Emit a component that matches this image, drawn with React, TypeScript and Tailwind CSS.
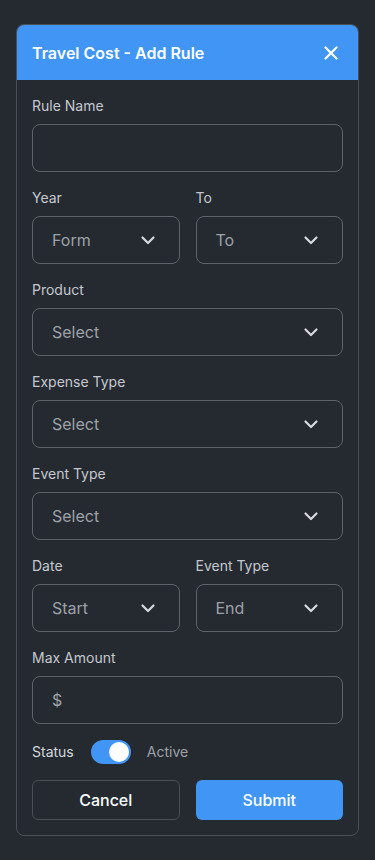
import React from "react";

function Chevron() {
  return (
    <svg width="24" height="24" viewBox="0 0 24 24" fill="none" stroke="#d6d9de" strokeWidth="2.2" strokeLinecap="round" strokeLinejoin="round">
      <path d="M6.5 9.5l5.5 5.5 5.5-5.5" />
    </svg>
  );
}

function SelectBox({ text }: { text: string }) {
  return (
    <div className="h-12 rounded-lg border border-[#5d636b] flex items-center justify-between pl-[19px] pr-[19px]">
      <span className="text-base text-[#9ca1a8]">{text}</span>
      <Chevron />
    </div>
  );
}

function Label({ children }: { children: React.ReactNode }) {
  return <div className="text-sm leading-5 text-[#c4c8ce] mb-2">{children}</div>;
}

export default function App() {
  return (
    <div className="min-h-[860px] bg-[#252a31] pt-6 px-4" style={{ fontFamily: "Inter, 'Noto Sans', sans-serif" }}>
      <div className="rounded-lg border border-[#4a4f57] overflow-hidden">
        <div className="bg-[#4195f5] h-[55px] flex items-center justify-between pl-[15px] pr-[19px]">
          <span className="text-white text-base font-semibold">Travel Cost - Add Rule</span>
          <svg width="16" height="16" viewBox="0 0 16 16" fill="none" stroke="white" strokeWidth="2.2" strokeLinecap="round">
            <path d="M2.5 2.5l11 11M13.5 2.5l-11 11" />
          </svg>
        </div>
        <div className="px-[15px] pt-[16px] pb-[15px] flex flex-col gap-4">
          <div>
            <Label>Rule Name</Label>
            <div className="h-12 rounded-lg border border-[#5d636b]" />
          </div>
          <div className="grid grid-cols-2 gap-4">
            <div>
              <Label>Year</Label>
              <SelectBox text="Form" />
            </div>
            <div>
              <Label>To</Label>
              <SelectBox text="To" />
            </div>
          </div>
          <div>
            <Label>Product</Label>
            <SelectBox text="Select" />
          </div>
          <div>
            <Label>Expense Type</Label>
            <SelectBox text="Select" />
          </div>
          <div>
            <Label>Event Type</Label>
            <SelectBox text="Select" />
          </div>
          <div className="grid grid-cols-2 gap-4">
            <div>
              <Label>Date</Label>
              <SelectBox text="Start" />
            </div>
            <div>
              <Label>Event Type</Label>
              <SelectBox text="End" />
            </div>
          </div>
          <div>
            <Label>Max Amount</Label>
            <div className="h-12 rounded-lg border border-[#5d636b] flex items-center pl-[19px]">
              <span className="text-base text-[#9ca1a8]">$</span>
            </div>
          </div>
          <div className="flex items-center h-6">
            <span className="text-sm text-[#d4d7dc]">Status</span>
            <div className="ml-[17px] w-10 h-6 rounded-full bg-[#4195f5] flex items-center justify-end pr-[2px]">
              <div className="w-5 h-5 rounded-full bg-white" />
            </div>
            <span className="ml-4 text-sm text-[#9ca1a8]">Active</span>
          </div>
          <div className="grid grid-cols-2 gap-4">
            <button className="h-10 rounded-md border border-[#4a4f57] text-white text-base font-medium">Cancel</button>
            <button className="h-10 rounded-md bg-[#4195f5] text-white text-base font-medium">Submit</button>
          </div>
        </div>
      </div>
    </div>
  );
}
